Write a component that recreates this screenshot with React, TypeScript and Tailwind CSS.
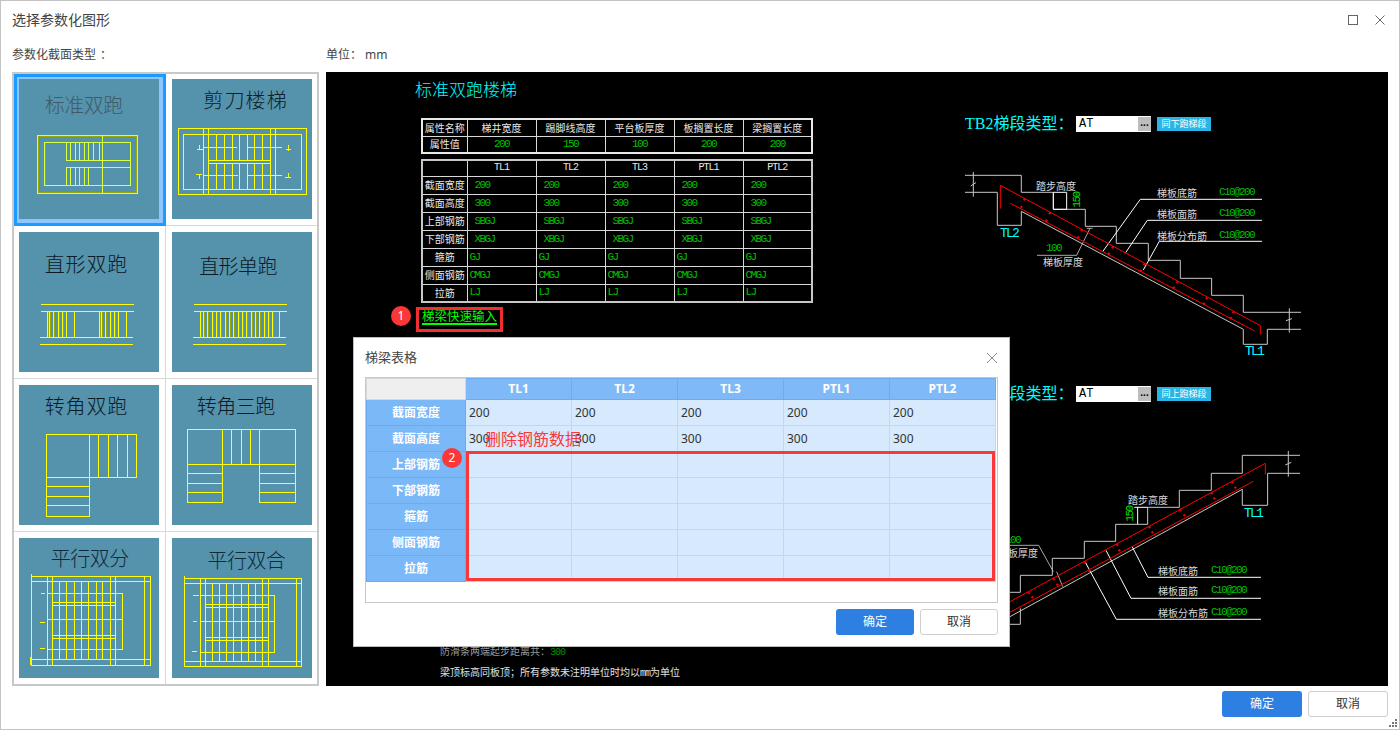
import React from "react";

const vs = (xs: number[], a: number, b: number) => xs.map((x) => `M${x} ${a}V${b}`).join("");
const hs = (ys: number[], a: number, b: number) => ys.map((y) => `M${a} ${y}H${b}`).join("");
const box = (a: number, b: number, c: number, d: number) => `M${a} ${b}H${c}V${d}H${a}Z`;

const thumbs = [
    {
        title: "标准双跑", vb: "57 237 420 420", tx: 252, ty: 312, tw: 235, color: "#d8ff40", text: "#3f5a68", olive: hs([409, 578], 112, 413) + vs([115, 410], 406, 581) + vs([136], 427, 556),
        d: box(112, 406, 413, 581) + box(133, 427, 391, 556) + vs([306], 406, 581) + vs([199, 212, 226, 239, 253, 266, 280, 298], 427, 480) + hs([480, 502], 199, 391) + vs([199, 212, 226, 239, 253, 265], 502, 556),
    },
    {
        title: "剪刀楼梯", vb: "516 237 420 420", tx: 735, ty: 297, tw: 250, color: "#ffff00", text: "#10202a", olive: "",
        d: box(535, 385, 919, 583) + box(551, 403, 905, 569) + vs([610, 625, 811, 826], 385, 583) + vs([649, 673, 697, 718, 742, 763, 787], 403, 481) + vs([649, 673, 697, 718, 742, 763, 787], 490, 569) + hs([481, 490], 625, 811) + hs([443], 610, 710) + hs([443], 742, 846) + hs([526], 610, 714) + hs([526], 745, 846) + hs([449], 590, 608) + hs([522], 588, 606) + hs([449], 857, 872) + hs([532], 855, 873) + vs([598], 434, 449) + vs([598], 522, 538) + vs([865], 436, 452) + vs([864], 518, 532),
    },
    {
        title: "直形双跑", vb: "57 696 420 420", tx: 258, ty: 790, tw: 247, color: "#ffff00", text: "#0c1a24", olive: vs([145, 151, 164, 177, 190, 301, 307, 320, 333, 346], 934, 1012),
        d: hs([914, 934], 123, 402) + hs([1012, 1034], 120, 400) + vs([142, 148, 161, 174, 187, 200, 222, 298, 304, 317, 330, 343, 356, 380], 934, 1012),
    },
    {
        title: "直形单跑", vb: "516 696 420 420", tx: 715, ty: 797, tw: 235, color: "#ffff00", text: "#0c1a24", olive: vs([604, 613, 626, 639, 652, 665, 678, 691, 704, 717, 730, 743, 756, 769, 782, 795, 808, 821], 934, 1012),
        d: hs([914, 934], 582, 860) + hs([1012, 1034], 580, 858) + vs([601, 610, 623, 636, 649, 662, 675, 688, 701, 714, 727, 740, 753, 766, 779, 792, 805, 818, 838], 934, 1012),
    },
    {
        title: "转角双跑", vb: "57 30 420 420", tx: 258, ty: 92, tw: 247, color: "#ffff00", text: "#0c1a24", olive: "",
        d: box(139, 178, 410, 308) + vs([269], 178, 423) + vs([295, 325, 353, 383], 178, 308) + box(139, 308, 269, 423) + hs([334, 364, 392], 139, 269),
    },
    {
        title: "转角三跑", vb: "516 30 420 420", tx: 708, ty: 92, tw: 235, color: "#ffff00", text: "#0c1a24", olive: "",
        d: box(562, 163, 887, 268) + vs([667, 695, 724, 751, 778], 163, 268) + box(562, 268, 667, 382) + box(778, 268, 887, 382) + hs([296, 325, 352], 562, 667) + hs([296, 325, 352], 778, 887),
    },
    {
        title: "平行双分", vb: "57 489 420 420", tx: 270, ty: 548, tw: 235, color: "#ffff00", text: "#0f2a3a", olive: "",
        d: box(94, 604, 450, 870) + hs([620, 853], 94, 450) + vs([142, 157, 331, 347, 433], 604, 870) + box(142, 655, 367, 823) + vs([179, 199, 222, 245, 265, 288, 307], 620, 853) + hs([683, 692, 782, 791], 157, 347) + hs([733], 142, 367) + hs([655], 122, 136) + hs([741], 120, 136) + hs([820], 120, 134) + vs([94], 598, 624) + vs([92], 845, 870),
    },
    {
        title: "平行双合", vb: "516 489 420 420", tx: 740, ty: 553, tw: 235, color: "#ffff00", text: "#0f2a3a", olive: "",
        d: box(552, 610, 905, 875) + hs([626, 858], 552, 905) + vs([601, 616, 788, 805, 889], 610, 875) + box(601, 661, 824, 831) + vs([637, 657, 680, 701, 724, 745, 767], 626, 858) + hs([688, 697, 787, 796], 616, 805) + hs([739], 601, 824) + hs([662], 578, 596) + hs([739], 578, 592) + hs([829], 576, 592) + vs([552], 604, 628) + vs([552], 850, 875),
    },
];

function Thumb({ t }: { t: (typeof thumbs)[number] }) {
    return (
        <svg width="140" height="140" viewBox={t.vb} className="block bg-[#5592ab]">
            <text x={t.tx} y={t.ty} textAnchor="middle" dominantBaseline="central" fontSize="60" fill={t.text} textLength={t.tw} fontFamily="'Noto Sans CJK SC',sans-serif" fontWeight="300">
                {t.title}
            </text>
            {t.olive && <path d={t.olive} fill="none" stroke="#9aa800" strokeWidth="3" shapeRendering="crispEdges" />}
            <path d={t.d} fill="none" stroke={t.color} strokeWidth="3" shapeRendering="crispEdges" />
        </svg>
    );
}

const attrHead = ["属性名称", "梯井宽度", "踢脚线高度", "平台板厚度", "板搁置长度", "梁搁置长度"];
const attrVals = ["200", "150", "100", "200", "200"];
const beamNames = ["TL1", "TL2", "TL3", "PTL1", "PTL2"];
const cadRows = [
    { label: "截面宽度", val: "200", indent: true },
    { label: "截面高度", val: "300", indent: true },
    { label: "上部钢筋", val: "SBGJ", indent: true },
    { label: "下部钢筋", val: "XBGJ", indent: true },
    { label: "箍筋", val: "GJ", indent: false },
    { label: "侧面钢筋", val: "CMGJ", indent: false },
    { label: "拉筋", val: "LJ", indent: false },
];
const colWidths = ["w-[45px]", "w-[69px]", "w-[69px]", "w-[69px]", "w-[69px]", "w-[69px]"];

function CadColgroup() {
    return (
        <colgroup>
            {colWidths.map((w, i) => (
                <col key={i} className={w} />
            ))}
        </colgroup>
    );
}

const stairTop = [
    "M105 226H274V277H370V328H466V379H559V430H655V481H751V535H845V586H940V637H1113",
    "M105 277H202V376H274V334L940 688V733H1012V688H1113",
    "M130 216V290M1078 625V698M122 258L138 248M1068 662L1086 656",
];
const stairTopWhite = "M631 298H996M631 298L518 455M652 361H996M652 361L587 458M688 424H996M688 424L640 510M370 277H410V328H370Z";
const stairTopThin = "M321 466H440L480 385M470 385H488";
const stairTopRed = "M211 326V256L991 677V704M241 310L974 693";
const topMarks: number[][] = [[283, 298], [359, 340], [455, 391], [548, 442], [643, 493], [742, 547], [830, 595], [910, 637], [274, 321], [349, 362], [445, 412], [537, 461], [633, 512], [732, 563], [822, 611], [903, 654]];

const stairLow = [
    "M30 652H61V601H157V550H253V499H347V448H443V397H538V346H634V295H727V241H900",
    "M30 748H61V700M30 725L727 343V391H803V295H900",
    "M865 228V305M856 270L874 262",
];
const stairLowWhite = "M397 516L444 607H783M318 526L393 670H783M255 560L349 733H783M403 397H443M413 397V447";
const stairLowThin = "M30 511H116L160 590M170 590L188 635";
const stairLowRed = "M30 680L796 265V299M30 712L760 319";
const lowMarks: number[][] = [[87, 654], [162, 613], [255, 562], [352, 510], [449, 457], [542, 405], [636, 355], [697, 322], [97, 667], [172, 629], [268, 588], [358, 526], [457, 472], [553, 421], [643, 370], [706, 338]];

const marks = (m: number[][]) => m.map(([x, y]) => `M${x - 4} ${y}H${x + 4}M${x} ${y - 4}V${y + 4}`).join("");

function Stair({ x, y, gray, white, thin, red, dots }: { x: number; y: number; gray: string[]; white: string; thin: string; red: string; dots: number[][] }) {
    return (
        <g transform={`translate(${x} ${y}) scale(0.3333)`} fill="none">
            {gray.map((d, i) => (
                <path key={i} d={d} stroke="#c8c8c8" strokeWidth="3" />
            ))}
            <path d={white} stroke="#ffffff" strokeWidth="3" />
            <path d={thin} stroke="#c8c8c8" strokeWidth="2.5" />
            <path d={red} stroke="#ff0000" strokeWidth="3" />
            <path d={marks(dots)} stroke="#ff0000" strokeWidth="3" />
        </g>
    );
}

const CJK = "'Noto Sans CJK SC',sans-serif";
const MONO = "'Liberation Mono',monospace";

function CadDrawing() {
    const label = (x: number, y: number, s: string, end?: boolean) => (
        <text x={x} y={y} fontSize="10" fill="#d8d8d8" fontFamily={CJK} dominantBaseline="central" textAnchor={end ? "end" : "start"}>
            {s}
        </text>
    );
    const val = (x: number, y: number, s: string) => (
        <text x={x} y={y} fontSize="11" letterSpacing="-1.6" fill="#00c000" fontFamily={MONO} dominantBaseline="central">
            {s}
        </text>
    );
    const cyan = (x: number, y: number, s: string) => (
        <text x={x} y={y} fontSize="13" letterSpacing="-1.8" fill="#00ffff" fontFamily={MONO} dominantBaseline="central">
            {s}
        </text>
    );
    return (
        <svg width="1062" height="614" viewBox="326 72 1062 614" className="absolute inset-0">
            <Stair x={930} y={100} gray={stairTop} white={stairTopWhite} thin={stairTopThin} red={stairTopRed} dots={topMarks} />
            <Stair x={1000} y={375} gray={stairLow} white={stairLowWhite} thin={stairLowThin} red={stairLowRed} dots={lowMarks} />
            {label(1036, 185, "踏步高度")}
            <text x={1077} y={200} fontSize="11" letterSpacing="-1.6" fill="#00e000" fontFamily={MONO} textAnchor="middle" dominantBaseline="central" transform="rotate(-90 1077 200)">
                150
            </text>
            {cyan(1000, 233, "TL2")}
            {val(1046, 248, "100")}
            {label(1043, 261, "梯板厚度")}
            {label(1157, 192, "梯板底筋")}
            {val(1219, 192, "C10@200")}
            {label(1157, 213, "梯板面筋")}
            {val(1219, 213, "C10@200")}
            {label(1157, 235, "梯板分布筋")}
            {val(1219, 235, "C10@200")}
            {cyan(1245, 351, "TL1")}
            {label(1128, 499, "踏步高度")}
            <text x={1130} y={514} fontSize="11" letterSpacing="-1.6" fill="#00e000" fontFamily={MONO} textAnchor="middle" dominantBaseline="central" transform="rotate(-90 1130 514)">
                150
            </text>
            {cyan(1244, 513, "TL1")}
            {val(1005, 540, "100")}
            {label(1038, 552, "梯板厚度", true)}
            {label(1158, 570, "梯板底筋")}
            {val(1211, 570, "C10@200")}
            {label(1158, 590, "梯板面筋")}
            {val(1211, 590, "C10@200")}
            {label(1158, 612, "梯板分布筋")}
            {val(1211, 612, "C10@200")}
        </svg>
    );
}

function CadTables() {
    const cell = "border border-[#d8d8d8] p-0 text-[10px] leading-none font-normal";
    const mono = "text-[#00c000] text-[11px] font-['Liberation_Mono',monospace] tracking-[-1.6px]";
    return (
        <div className="absolute left-[95px] top-[46px] w-[390px] text-[#e8e8e8] font-['Noto_Sans_CJK_SC',sans-serif]">
            <table className="table-fixed w-[390px] border-collapse border-2 border-[#e8e8e8]">
                <CadColgroup />
                <tbody>
                    <tr className="h-[17px]">
                        {attrHead.map((h) => (
                            <td key={h} className={`${cell} text-center`}>{h}</td>
                        ))}
                    </tr>
                    <tr className="h-[17px]">
                        <td className={`${cell} text-center`}>属性值</td>
                        {attrVals.map((v, i) => (
                            <td key={i} className={`${cell} text-center ${mono}`}>{v}</td>
                        ))}
                    </tr>
                </tbody>
            </table>
            <table className="table-fixed w-[390px] border-collapse border-2 border-[#c8c8c8] mt-[5px]">
                <CadColgroup />
                <tbody>
                    <tr className="h-[16px]">
                        <td className={cell}></td>
                        {beamNames.map((n) => (
                            <td key={n} className={`${cell} text-center font-['Liberation_Mono',monospace] tracking-[-1px]`}>{n}</td>
                        ))}
                    </tr>
                    {cadRows.map((r) => (
                        <tr key={r.label} className="h-[18px]">
                            <td className={`${cell} text-center`}>{r.label}</td>
                            {beamNames.map((n) => (
                                <td key={n} className={`${cell} ${mono} ${r.indent ? "pl-[7px]" : "pl-[2px]"}`}>{r.val}</td>
                            ))}
                        </tr>
                    ))}
                </tbody>
            </table>
        </div>
    );
}

function SegPicker({ top, prefix, tag }: { top: string; prefix: string; tag: string }) {
    return (
        <>
            <div className={`absolute ${top} left-[639px] h-[16px] flex items-center whitespace-nowrap text-[16px] text-[#00ffff] font-['Liberation_Serif','Noto_Sans_CJK_SC',serif]`}>{prefix}</div>
            <div className={`absolute ${top} left-[750px] w-[75px] h-[16px] bg-white flex items-center justify-between`}>
                <span className="pl-[3px] text-[12px] text-black font-['Liberation_Mono',monospace]">AT</span>
                <span className="w-[13px] h-[14px] bg-[#bdbdbd] text-black text-[10px] leading-[10px] text-center font-bold">...</span>
            </div>
            <div className={`absolute ${top} left-[831px] w-[54px] h-[14px] mt-px bg-[#29b6e6] text-white text-[9px] leading-[14px] text-center font-['Noto_Sans_CJK_SC',sans-serif]`}>{tag}</div>
        </>
    );
}

const modalRows = [
    { label: "截面宽度", val: "200" },
    { label: "截面高度", val: "300" },
    { label: "上部钢筋", val: "" },
    { label: "下部钢筋", val: "" },
    { label: "箍筋", val: "" },
    { label: "侧面钢筋", val: "" },
    { label: "拉筋", val: "" },
];

function Badge({ n, className }: { n: string; className: string }) {
    return <span className={`absolute w-[20px] h-[20px] rounded-full bg-[#fb3838] text-white text-[12px] leading-[20px] text-center ${className}`}>{n}</span>;
}

function Button({ primary, children, className }: { primary?: boolean; children: React.ReactNode; className: string }) {
    return (
        <button className={`h-[26px] rounded-[3px] text-[12px] ${primary ? "bg-[#2d7fe2] text-white" : "bg-white border border-[#cfcfcf] text-[#333]"} ${className}`}>
            {children}
        </button>
    );
}

function BeamModal() {
    return (
        <div className="absolute left-[352px] top-[336px] w-[657px] h-[310px] bg-white border border-[#bcbcbc] flex flex-col pl-[11px] pr-[11px]">
            <div className="h-[39px] flex items-center justify-between">
                <span className="text-[13px] text-[#444]">梯梁表格</span>
                <svg width="12" height="12" viewBox="0 0 12 12">
                    <path d="M1 1L11 11M11 1L1 11" stroke="#8c8c8c" strokeWidth="1" fill="none" />
                </svg>
            </div>
            <div className="relative w-[633px] h-[226px] border border-[#c8c8c8]">
                <table className="table-fixed border-collapse w-[629px]">
                    <colgroup>
                        <col className="w-[99px]" />
                        <col className="w-[106px]" />
                        <col className="w-[106px]" />
                        <col className="w-[106px]" />
                        <col className="w-[106px]" />
                        <col className="w-[106px]" />
                    </colgroup>
                    <thead>
                        <tr className="h-[21px]">
                            <th className="bg-[#efefef] border border-[#d8d8d8] p-0"></th>
                            {beamNames.map((n) => (
                                <th key={n} className="bg-[#7fb9f8] border border-[#6eaaec] p-0 text-[12px] font-bold text-white">{n}</th>
                            ))}
                        </tr>
                    </thead>
                    <tbody>
                        {modalRows.map((r) => (
                            <tr key={r.label} className="h-[26px]">
                                <th className="bg-[#7ab8f8] border border-[#6eaaec] p-0 text-[12px] font-bold text-white">{r.label}</th>
                                {beamNames.map((n) => (
                                    <td key={n} className="bg-[#d6e9fd] border border-[#d0d3dc] pl-[3px] py-0 pr-0 text-[12px] text-[#333]">{r.val}</td>
                                ))}
                            </tr>
                        ))}
                    </tbody>
                </table>
                <div className="absolute left-[100px] top-[73px] w-[529px] h-[130px] border-[3px] border-[#fb3838]"></div>
                <span className="absolute left-[119px] top-[50px] text-[16px] leading-[22px] text-[#fb3838] whitespace-nowrap">删除钢筋数据</span>
                <Badge n="2" className="left-[76px] top-[70px]" />
            </div>
            <div className="flex justify-end gap-[6px] mt-[6px]">
                <Button primary className="w-[78px]">确定</Button>
                <Button className="w-[78px]">取消</Button>
            </div>
        </div>
    );
}

export default function App() {
    return (
        <div className="relative w-[1400px] h-[730px] bg-white border border-[#c4c4c4] overflow-hidden text-[#333] font-['Noto_Sans','Noto_Sans_CJK_SC',sans-serif]">
            {/* title bar */}
            <div className="h-[37px] pl-[11px] pr-[14px] flex items-center justify-between">
                <span className="text-[14px] leading-none text-[#444]">选择参数化图形</span>
                <div className="flex items-center gap-[17px]">
                    <svg width="10" height="10" viewBox="0 0 10 10">
                        <rect x="0.5" y="0.5" width="9" height="9" fill="none" stroke="#666" />
                    </svg>
                    <svg width="10" height="10" viewBox="0 0 10 10">
                        <path d="M0.5 0.5L9.5 9.5M9.5 0.5L0.5 9.5" stroke="#666" fill="none" />
                    </svg>
                </div>
            </div>

            {/* labels */}
            <div className="h-[34px] pl-[11px] flex items-center text-[12px] text-[#444]">
                <span className="w-[314px]">参数化截面类型<span className="ml-[4px]">：</span></span>
                <span>单位： mm</span>
            </div>

            <div className="flex pl-[11px] gap-[7px]">
                {/* section types */}
                <div className="w-[307px] h-[614px] border-2 border-[#c8c8c8] grid grid-cols-[152px_1fr] grid-rows-[152px_153px_153px_1fr]">
                    {thumbs.map((t, i) => (
                        <div
                            key={t.title}
                            className={`${i % 2 === 0 ? "border-r border-r-[#d8d8d8] pl-[5px]" : "pl-[6px]"} ${i < 6 ? "border-b border-b-[#d8d8d8]" : ""} ${i < 2 ? "pt-[5px]" : "pt-[6px]"} ${i === 0 ? "outline-[3px] outline-[#1a9bff] -outline-offset-3 bg-[#8ec5ff]" : ""}`}
                        >
                            <Thumb t={t} />
                        </div>
                    ))}
                </div>

                {/* CAD preview */}
                <div className="relative w-[1062px] h-[614px] bg-black">
                    <CadDrawing />
                    <div className="absolute left-[89px] top-[8px] text-[17px] leading-[20px] text-[#00ffff] font-light">标准双跑楼梯</div>
                    <CadTables />
                    <Badge n="1" className="left-[65px] top-[234px]" />
                    <div className="absolute left-[90px] top-[235px] w-[87px] h-[25px] border-[3px] border-[#f03030] pl-[3px] text-[12.5px] leading-[13px] text-[#00ff00] whitespace-nowrap">
                        <span className="block w-[75px] border-b-2 border-[#00ff00]">梯梁快速输入</span>
                    </div>
                    <SegPicker top="top-[44px]" prefix="TB2梯段类型：" tag="同下跑梯段" />
                    <SegPicker top="top-[314px]" prefix="TB1梯段类型：" tag="同上跑梯段" />
                    <div className="absolute left-[114px] top-[572px] text-[10px] leading-[14px] text-[#9a9a9a] whitespace-nowrap">
                        防滑条两端起步距离共：<span className="text-[#009000] font-['Liberation_Mono',monospace] tracking-[-1px]">300</span>
                    </div>
                    <div className="absolute left-[114px] top-[593px] text-[10px] leading-[14px] text-[#e0e0e0] whitespace-nowrap">
                        梁顶标高同板顶；所有参数未注明单位时均以<span className="font-['Liberation_Mono',monospace] tracking-[-1px]">mm</span>为单位
                    </div>
                </div>
            </div>

            {/* footer */}
            <div className="flex justify-end gap-[6px] pr-[11px] mt-[5px]">
                <Button primary className="w-[80px]">确定</Button>
                <Button className="w-[80px]">取消</Button>
            </div>

            <BeamModal />

            <svg width="10" height="10" viewBox="0 0 10 10" className="absolute right-[1px] bottom-[1px]">
                <path d="M7 1h2v2h-2zM4 4h2v2h-2zM7 4h2v2h-2zM1 7h2v2h-2zM4 7h2v2h-2zM7 7h2v2h-2z" fill="#777" />
            </svg>
        </div>
    );
}
